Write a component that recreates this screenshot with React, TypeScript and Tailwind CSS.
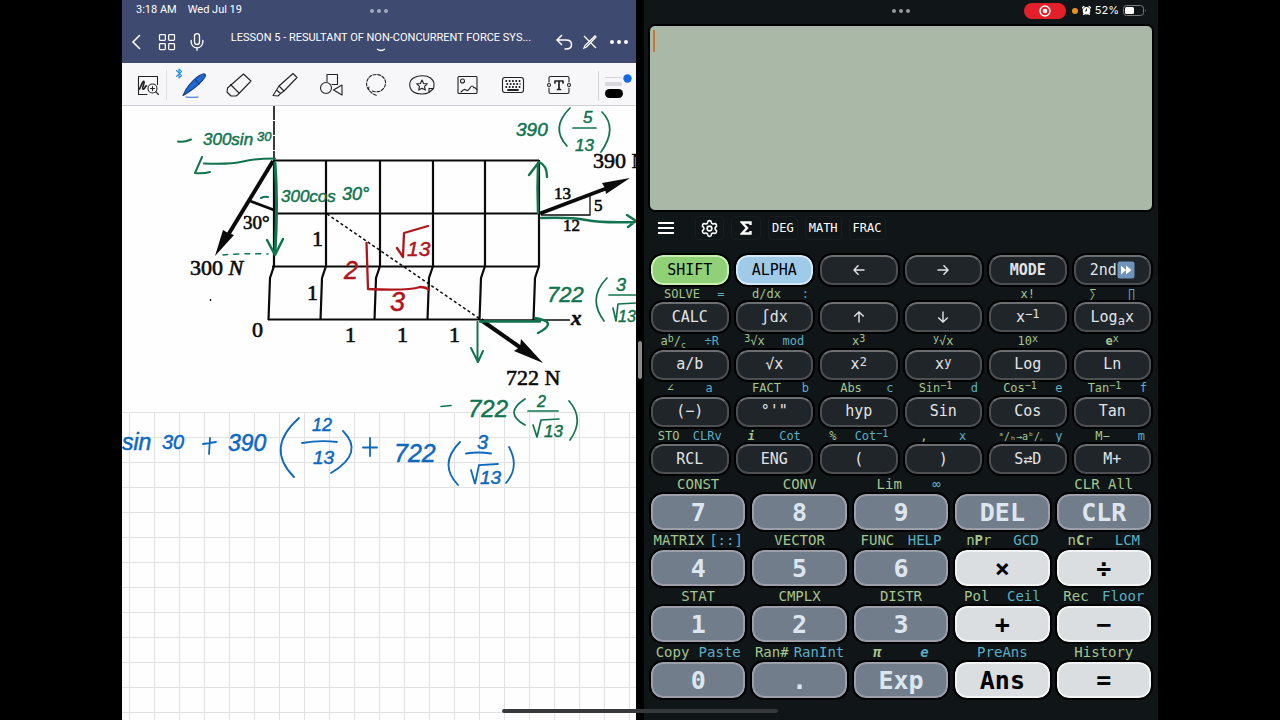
import type { ReactNode } from "react";
import { Settings, Mic, LayoutGrid } from "lucide-react";

type Label = { a?: ReactNode; b?: ReactNode; spread?: "around" | "wide" | "third" };
type Key = Label & { k: ReactNode; name: string; tone?: "shift" | "alpha" | "light"; bold?: boolean };

const Sup = ({ children }: { children: ReactNode }) => (
  <span className="relative -top-[3px] text-[12px]">{children}</span>
);
const Sub = ({ children }: { children: ReactNode }) => (
  <span className="relative top-1 text-[12px]">{children}</span>
);
const Tiny = ({ children, low }: { children: ReactNode; low?: boolean }) => (
  <span className={low ? "relative top-[3px] text-[8px]" : "relative -top-[3px] text-[10px]"}>{children}</span>
);

const Arrow = ({ turn }: { turn: string }) => (
  <svg viewBox="0 0 12 12" className={`size-3 ${turn}`} fill="none" stroke="currentColor" strokeWidth="1.4">
    <path d="M11.5 6H1M5.5 1.2L1 6l4.5 4.8" />
  </svg>
);

const functionRows: Key[][] = [
  [
    { k: "SHIFT", name: "Shift", tone: "shift" },
    { k: "ALPHA", name: "Alpha", tone: "alpha" },
    { k: <Arrow turn="rotate-0" />, name: "Left" },
    { k: <Arrow turn="rotate-180" />, name: "Right" },
    { k: "MODE", name: "Mode", bold: true },
    {
      k: (
        <>
          2nd
          <svg viewBox="0 0 18 18" className="size-[18px]">
            <rect x="0.5" y="0.5" width="17" height="17" rx="2.5" fill="#6f93ba" />
            <path d="M4 4.5L9 9l-5 4.5zM9 4.5L14.500 9 9 13.500z" fill="#fff" />
          </svg>
        </>
      ),
      name: "Second",
    },
  ],
  [
    { a: "SOLVE", b: "=", spread: "wide", k: "CALC", name: "Calc" },
    { a: "d/dx", b: ":", spread: "wide", k: "∫dx", name: "Integral" },
    { k: <Arrow turn="rotate-90" />, name: "Up" },
    { k: <Arrow turn="-rotate-90" />, name: "Down" },
    { a: "x!", k: <>x<Sup>−1</Sup></>, name: "Inverse" },
    { a: "∑", b: "∏", k: <>Log<Sub>a</Sub>x</>, name: "Log base a" },
  ],
  [
    { a: <>a<Tiny>b</Tiny>/<Tiny low>c</Tiny></>, b: "÷R", k: "a/b", name: "Fraction" },
    { a: <><Tiny>3</Tiny>√x</>, b: "mod", k: "√x", name: "Square root" },
    { a: <>x<Tiny>3</Tiny></>, k: <>x<Sup>2</Sup></>, name: "Square" },
    { a: <><Tiny>y</Tiny>√x</>, k: <>x<Sup>y</Sup></>, name: "Power" },
    { a: <>10<Tiny>x</Tiny></>, k: "Log", name: "Log" },
    { a: <><b>e</b><Tiny>x</Tiny></>, k: "Ln", name: "Ln" },
  ],
  [
    { a: "∠", b: "a", k: "(−)", name: "Negative" },
    { a: "FACT", b: "b", spread: "wide", k: "°'\"", name: "Degrees minutes seconds" },
    { a: "Abs", b: "c", spread: "wide", k: "hyp", name: "Hyperbolic" },
    { a: <>Sin<Tiny>−1</Tiny></>, b: "d", spread: "wide", k: "Sin", name: "Sin" },
    { a: <>Cos<Tiny>−1</Tiny></>, b: "e", spread: "wide", k: "Cos", name: "Cos" },
    { a: <>Tan<Tiny>−1</Tiny></>, b: "f", spread: "wide", k: "Tan", name: "Tan" },
  ],
  [
    { a: "STO", b: "CLRv", k: "RCL", name: "Recall" },
    { a: <b><i>i</i></b>, b: "Cot", k: "ENG", name: "Eng" },
    { a: "%", b: <>Cot<Tiny>−1</Tiny></>, k: "(", name: "Open bracket" },
    { a: ",", b: "x", k: ")", name: "Close bracket" },
    {
      a: <span className="text-[10px]">ᵃ/ₕ→aᵇ/<span className="text-[7px]">꜀</span></span>,
      b: "y",
      spread: "wide",
      k: "S⇄D",
      name: "S to D",
    },
    { a: "M−", b: "m", spread: "third", k: "M+", name: "M plus" },
  ],
];

const numberRows: Key[][] = [
  [
    { a: "CONST", k: "7", name: "7" },
    { a: "CONV", k: "8", name: "8" },
    { a: "Lim", b: "∞", spread: "third", k: "9", name: "9" },
    { k: "DEL", name: "Delete" },
    { a: "CLR All", k: "CLR", name: "Clear" },
  ],
  [
    { a: "MATRIX", b: "[::]", k: "4", name: "4" },
    { a: "VECTOR", k: "5", name: "5" },
    { a: "FUNC", b: "HELP", k: "6", name: "6" },
    { a: <>n<b>P</b>r</>, b: "GCD", k: "×", name: "Multiply", tone: "light" },
    { a: <>n<b>C</b>r</>, b: "LCM", k: "÷", name: "Divide", tone: "light" },
  ],
  [
    { a: "STAT", k: "1", name: "1" },
    { a: "CMPLX", k: "2", name: "2" },
    { a: "DISTR", k: "3", name: "3" },
    { a: "Pol", b: "Ceil", k: "+", name: "Plus", tone: "light" },
    { a: "Rec", b: "Floor", k: "−", name: "Minus", tone: "light" },
  ],
  [
    { a: "Copy", b: "Paste", k: "0", name: "0" },
    { a: "Ran#", b: "RanInt", k: ".", name: "Point" },
    { a: <b><i>π</i></b>, b: <b><i>e</i></b>, k: "Exp", name: "Exp" },
    { b: "PreAns", k: "Ans", name: "Answer", tone: "light" },
    { a: "History", k: "=", name: "Equals", tone: "light" },
  ],
];

function Labels({ a, b, spread = "around" }: Label) {
  const layout =
    spread === "wide"
      ? "grid grid-cols-[4fr_1fr] justify-items-center"
      : spread === "third"
        ? "grid grid-cols-[3fr_1fr] justify-items-center"
        : "flex justify-around";
  return (
    <div className={`${layout} items-center whitespace-pre`}>
      {a && <span className="text-[#a5c68e]">{a}</span>}
      {b && <span className="text-[#5cafc6]">{b}</span>}
    </div>
  );
}

function FunctionKey({ k, name, tone, bold }: Key) {
  const look =
    tone === "shift"
      ? "border-[#c6efb0] bg-[#90d076] text-black"
      : tone === "alpha"
        ? "border-[#d3e9f7] bg-[#9fcbe8] text-black"
        : "border-[#4c5053] border-t-[#6c6f72] bg-[#20252a] text-[#e0e4e6]";
  return (
    <button
      aria-label={name}
      className={`flex h-[30px] items-center justify-center whitespace-pre rounded-xl border-2 text-[15px] leading-none outline-2 outline-black ${look} ${bold ? "font-bold" : ""}`}
    >
      {k}
    </button>
  );
}

function NumberKey({ k, name, tone }: Key) {
  const look =
    tone === "light"
      ? "border-[#f1f3f4] bg-[#dadee1] text-black"
      : "border-[#9a9fa9] bg-[#727d8c] text-[#dde6ef]";
  return (
    <button
      aria-label={name}
      className={`flex h-9 items-center justify-center rounded-xl border-2 text-[25px] leading-none font-bold outline-2 outline-black ${look}`}
    >
      {k}
    </button>
  );
}

function ModeButton({ children, name, pad = "px-[3px]" }: { children: ReactNode; name: string; pad?: string }) {
  return (
    <button
      aria-label={name}
      className={`flex h-6 items-center justify-center rounded-sm border border-[#181e20] text-[12px] text-white ${pad}`}
    >
      {children}
    </button>
  );
}

function Calculator() {
  return (
    <section
      aria-label="Calculator"
      className="flex min-w-0 flex-col bg-[#101517] pb-[22px] font-['DejaVu_Sans_Mono',monospace]"
    >
      <div className="grid h-[25px] grid-cols-3 items-center px-[11px] pb-1">
        <span />
        <span className="flex justify-center gap-[3px]">
          <i className="size-1 rounded-full bg-[#96999b]" />
          <i className="size-1 rounded-full bg-[#96999b]" />
          <i className="size-1 rounded-full bg-[#96999b]" />
        </span>
        <span className="flex items-center justify-end gap-1 font-[Inter,sans-serif] text-[11px] text-white">
          <span className="mr-[2px] flex h-4 w-[42px] items-center justify-center rounded-full bg-[#e2202a]">
            <svg viewBox="0 0 12 12" className="size-3" fill="none" stroke="#fff" strokeWidth="1.400">
              <circle cx="6" cy="6" r="5" />
              <circle cx="6" cy="6" r="2.300" fill="#fff" stroke="none" />
            </svg>
          </span>
          <i className="size-[6px] rounded-full bg-[#e8921d]" />
          <svg viewBox="0 0 10 10" className="size-[9px]">
            <circle cx="5" cy="5.200" r="4.200" fill="#fff" />
            <path d="M0 2.500L2.500 0M10 2.500L7.500 0M1.500 10l1.500-2M8.500 10L7 8" stroke="#fff" strokeWidth="1.500" />
            <path d="M5 2.800v2.700H3.200" stroke="#101517" fill="none" />
          </svg>
          52%
          <svg viewBox="0 0 24 11" className="h-[11px] w-6">
            <rect x="0.500" y="0.500" width="20" height="10" rx="3" fill="none" stroke="#777b7d" />
            <rect x="2" y="2" width="9" height="7" rx="1.500" fill="#fff" />
            <path d="M22 4v3q1.500-1.500 0-3" fill="#777b7d" />
          </svg>
        </span>
      </div>

      <label className="mx-[5px] flex h-[186px] rounded-md border border-black bg-[#a9b8a7] py-1 pl-[3px] outline-1 outline-black">
        <span className="h-[22px] w-[2px] bg-[#c57b2b]" />
        <textarea aria-label="Expression" className="min-w-0 flex-1 resize-none bg-transparent p-1 text-base text-black outline-none" />
      </label>

      <nav className="mt-[5px] mb-[15px] flex h-6 items-center gap-[7px] pl-[14px]">
        <button aria-label="Menu" className="mr-[14px] flex flex-col gap-[3px]">
          <i className="h-[2px] w-4 bg-white" />
          <i className="h-[2px] w-4 bg-white" />
          <i className="h-[2px] w-4 bg-white" />
        </button>
        <ModeButton name="Settings" pad="px-1"><Settings size={19} strokeWidth={2} /></ModeButton>
        <ModeButton name="Sum" pad="px-2">
          <svg viewBox="0 0 12 14" className="h-[14px] w-3" fill="none" stroke="#fff" strokeWidth="2.400">
            <path d="M10.500 4V1.500H2L7 7l-5 5.500h8.500V10" />
          </svg>
        </ModeButton>
        <ModeButton name="Degrees">DEG</ModeButton>
        <ModeButton name="Math">MATH</ModeButton>
        <ModeButton name="Fractions">FRAC</ModeButton>
      </nav>

      <div className="flex flex-1 flex-col justify-between px-[7px] text-[12px] leading-none">
        {functionRows.map((row, i) => (
          <div key={i} className="grid grid-cols-6 gap-x-[7px]">
            {row.map((key) => (
              <div key={key.name} className="flex flex-col">
                {i > 0 && <div className="grid h-[17px]"><Labels {...key} /></div>}
                <FunctionKey {...key} />
              </div>
            ))}
          </div>
        ))}
      </div>

      <div className="px-[7px] text-[14px] leading-none">
        {numberRows.map((row, i) => (
          <div key={i} className="grid grid-cols-5 gap-x-[7px]">
            {row.map((key) => (
              <div key={key.name} className="flex flex-col">
                <div className="grid h-5"><Labels {...key} /></div>
                <NumberKey {...key} />
              </div>
            ))}
          </div>
        ))}
      </div>
    </section>
  );
}

function ToolIcon({ children }: { children: ReactNode }) {
  return (
    <svg viewBox="0 0 26 26" className="size-[26px]" fill="none" stroke="#222" strokeWidth="1.100" strokeLinejoin="round" strokeLinecap="round">
      {children}
    </svg>
  );
}

const tools: { name: string; icon: ReactNode }[] = [
  {
    name: "Zoom window",
    icon: (
      <>
        <path d="M12 22.500H3.500v-18h19v8" />
        <path d="M4.500 17C6 14 8 8 9 9.500S6.500 16 8 17s2.500-4 3.500-3" strokeWidth="1.700" />
        <circle cx="17.500" cy="16.500" r="4.500" fill="#f7f7f9" />
        <path d="M15.500 16.500h4M17.500 14.500v4M21 20l2.500 2.500" />
      </>
    ),
  },
  {
    name: "Pen",
    icon: (
      <>
        <path d="M2 23.500L5 17.500C9 11 17 3 22 2c2.500-.5 3 1.500 2 3C21 10 13 16.500 7 20.500z" fill="#2068cf" stroke="#163c7c" />
        <path d="M14 7.500l4 4.500" stroke="#163c7c" />
        <path d="M5 25q6 .5 12 0" stroke="#2068cf" />
        <path d="M-4.500 -1.500l5 5-2.500 2.500v-9l2.500 2.500-5 5" stroke="#2a8edb" />
      </>
    ),
  },
  { name: "Eraser", icon: <path d="M17.500 2L25 9 12 22.500 10 24H5l-4-4 .500-4zM4.500 12.500l8.500 8.500" /> },
  { name: "Highlighter", icon: <path d="M21 1.500L25 5.500 12 19l-5-5zM7 14l-2.500 4 4 3.500 3.500-2.500M4.500 18L1 23.500l5 .500 2.500-2.500" /> },
  {
    name: "Shapes",
    icon: (
      <>
        <path d="M9 9.500V2.500h10.500v10H14M24 13v10l-8.500-5z" />
        <circle cx="8" cy="16" r="5.500" />
      </>
    ),
  },
  {
    name: "Lasso",
    icon: <path d="M6 18C1 13 4 2.500 13 2.500S26 12 19 18c-3 2.500-8 2-11 .500M6 15c-2 3 3 7 8 8.500" strokeDasharray="3 1.600" />,
  },
  {
    name: "Stickers",
    icon: (
      <>
        <path d="M20 20.500c-4 2-12 2-15.500-.500C-.5 16-.5 9 4.500 6s13-3 17 0 4.500 6 3 10.500zM20 20.500V16.500h4.500" />
        <path d="M13 8l1.600 3.500 3.700.4-2.800 2.500.8 3.700-3.300-1.900-3.300 1.900.8-3.700-2.800-2.500 3.700-.4z" />
      </>
    ),
  },
  {
    name: "Image",
    icon: (
      <>
        <rect x="3" y="4.500" width="19" height="17" rx="1" />
        <circle cx="7.500" cy="9" r="2" />
        <path d="M6 20c4-4 4-2.500 6-1.500s3-4.500 5-4.500 1 2.500 2.500 1.500l2.500 2" />
      </>
    ),
  },
  {
    name: "Keyboard",
    icon: (
      <>
        <rect x="2.500" y="5.500" width="21" height="15" rx="2.500" />
        <path d="M5.500 9h15.500M6.500 12h14M5.500 15h15.500" strokeDasharray="1.600 1.700" strokeWidth="1.800" strokeLinecap="butt" />
        <path d="M8 18h10" strokeWidth="1.800" />
      </>
    ),
  },
  {
    name: "Text",
    icon: (
      <>
        <path d="M3 10V6q0-1.500 1.500-1.500h17Q23 4.500 23 6v4M3 16v4q0 1.500 1.500 1.500h17q1.500 0 1.500-1.500v-4" />
        <circle cx="3" cy="13" r="1.500" />
        <circle cx="23" cy="13" r="1.500" />
        <path d="M9 11V9h8v2M13 9v8.500M11.500 17.500h3" strokeWidth="1.700" />
      </>
    ),
  },
];

const GREEN = "#11744f";
const BLUE = "#0d68bf";
const RED = "#b0151b";

type Ink = { x: number; y: number; s: number; t: string };

function Written({ color, items }: { color: string; items: Ink[] }) {
  return (
    <g fill={color} stroke={color} strokeWidth="0.500" fontFamily="'Liberation Sans', sans-serif" fontStyle="italic">
      {items.map((w, i) => (
        <text key={i} x={w.x} y={w.y} fontSize={w.s}>{w.t}</text>
      ))}
    </g>
  );
}

const printed: Ink[] = [
  { x: 243, y: 229, s: 19, t: "30°" },
  { x: 593, y: 168, s: 22, t: "390 N" },
  { x: 554, y: 199, s: 17, t: "13" },
  { x: 594, y: 211, s: 17, t: "5" },
  { x: 563, y: 231, s: 17, t: "12" },
  { x: 312, y: 246, s: 22, t: "1" },
  { x: 307, y: 300, s: 22, t: "1" },
  { x: 345, y: 342, s: 22, t: "1" },
  { x: 397, y: 342, s: 22, t: "1" },
  { x: 449, y: 342, s: 22, t: "1" },
  { x: 252, y: 337, s: 22, t: "0" },
  { x: 506, y: 385, s: 22, t: "722 N" },
];

const columns = [274, 326, 380, 433, 485, 539];

function Sheet() {
  return (
    <svg viewBox="122 106 514 614" className="block w-full" role="img" aria-label="Force diagram and notes">
      <defs>
        <pattern id="squares" x="129" y="412" width="25" height="25" patternUnits="userSpaceOnUse">
          <path d="M0.500 0v25M0 0.500h25" stroke="#e1e1e4" fill="none" />
        </pattern>
      </defs>
      <rect x="122" y="106" width="514" height="614" fill="#fefefe" />
      <rect x="122" y="412" width="514" height="308" fill="url(#squares)" />

      <g stroke="#0a0a0a" fill="none" strokeWidth="2.200">
        <path d="M274 106v54" strokeWidth="1.600" strokeDasharray="14 1" />
        <path d="M274 160.500h265M274 213.500h265M272 266.500h266M268 319.500h212" />
        <path d="M480 320h90" strokeWidth="1.500" />
        {columns.map((x) => (
          <path key={x} d={`M${x} 160V266l-4 12-1.500 42`} />
        ))}
        <path d="M327 214L480 319" strokeWidth="1.500" strokeDasharray="3 2.500" />
        <path d="M273 161L225 240" strokeWidth="4" />
        <path d="M250 201l24 9" strokeWidth="2.600" />
        <path d="M540 213.500l66-25" strokeWidth="3.600" />
        <path d="M541 215h49V196" strokeWidth="1.300" />
        <path d="M481 320l40 28" strokeWidth="4" />
      </g>
      <g fill="#0a0a0a">
        <path d="M215 256l8-26 5 3 6 2z" />
        <path d="M630 178l-28 5 3 5 1 6z" />
        <path d="M543 363l-29-12 6-4 1-8z" />
        <circle cx="210.500" cy="300" r="0.900" />
      </g>
      <g fill="#0a0a0a" stroke="#0a0a0a" strokeWidth="0.600" fontFamily="'Liberation Serif', serif">
        {printed.map((p, i) => (
          <text key={i} x={p.x} y={p.y} fontSize={p.s}>{p.t}</text>
        ))}
        <text x="190" y="275" fontSize="22">300 <tspan fontStyle="italic">N</tspan></text>
        <text x="571" y="325" fontSize="21" fontStyle="italic" fontWeight="bold">x</text>
      </g>

      <g stroke={GREEN} fill="none" strokeWidth="2" strokeLinecap="round" strokeLinejoin="round">
        <path d="M178 141.500q6 1 13-2" />
        <path d="M275 158.500q-20 0-32 3t-39 2M202 157l-7 16q8 1 15-1" />
        <path d="M261 198q4-2 7-1" />
        <path d="M275 163q3 40 0 90" strokeWidth="3" />
        <path d="M267 240l8 15 8-16" strokeWidth="2.500" />
        <path d="M223 255q20-2 45-1" strokeDasharray="5 6" strokeWidth="1.500" />
        <path d="M538 213q-1-26 0-50M529 175l10-13q8 3 8 15" strokeWidth="2.400" />
        <path d="M541 218q30-1 45 2t49 2M627 215l9 6-8 6" strokeWidth="2.400" />
        <path d="M480 321.500h60M535 318q13 2 13 6t-10 9" strokeWidth="2.400" />
        <path d="M477.500 322v40M471 348l7 14 5-11" />
        <path d="M570 108q-20 20-3 38M573 128h23M602 112q16 16-1 40" strokeWidth="1.700" />
        <path d="M607 278q-20 20-3 43M609 295h27M613 308l3 13 2-17 18-1" strokeWidth="1.700" />
        <path d="M441 406.500l10-1M525 399q-22 14 0 26M528 411h30M533 425l4 12 4-17 18-1M569 401q16 18 1 39" strokeWidth="1.700" />
      </g>
      <Written
        color={GREEN}
        items={[
          { x: 203, y: 145, s: 17, t: "300sin" },
          { x: 257, y: 141, s: 13, t: "30" },
          { x: 281, y: 202, s: 17, t: "300cos" },
          { x: 342, y: 200, s: 18, t: "30°" },
          { x: 516, y: 136, s: 19, t: "390" },
          { x: 583, y: 123, s: 17, t: "5" },
          { x: 575, y: 151, s: 17, t: "13" },
          { x: 547, y: 302, s: 22, t: "722" },
          { x: 616, y: 291, s: 18, t: "3" },
          { x: 618, y: 322, s: 16, t: "13" },
          { x: 468, y: 417, s: 24, t: "722" },
          { x: 537, y: 407, s: 16, t: "2" },
          { x: 544, y: 437, s: 17, t: "13" },
        ]}
      />

      <g stroke={BLUE} fill="none" strokeWidth="1.800" strokeLinecap="round">
        <path d="M203 444l13-2M210 438l-1 16M363 447.500h14M370 438v18" />
        <path d="M299 418q-34 30-5 59M302 443q18-3 35-1M343 431q22 22-12 42" />
        <path d="M460 442q-22 22-2 43M466 453.500q12-2 25 0M471 470l4 14 4-19 19-1M509 447q11 20-3 36" />
      </g>
      <Written
        color={BLUE}
        items={[
          { x: 122, y: 450, s: 23, t: "sin" },
          { x: 162, y: 449, s: 20, t: "30" },
          { x: 228, y: 451, s: 23, t: "390" },
          { x: 312, y: 431, s: 18, t: "12" },
          { x: 313, y: 464, s: 19, t: "13" },
          { x: 394, y: 462, s: 25, t: "722" },
          { x: 477, y: 449, s: 20, t: "3" },
          { x: 480, y: 484, s: 19, t: "13" },
        ]}
      />

      <g stroke={RED} fill="none" strokeWidth="2.300" strokeLinecap="round" strokeLinejoin="round">
        <path d="M366.500 243l1.500 46q40 2 52-2 6 0 9 3" />
        <path d="M397 248l6 9 1-24 24-7" />
      </g>
      <Written
        color={RED}
        items={[
          { x: 407, y: 256, s: 21, t: "13" },
          { x: 344, y: 279, s: 25, t: "2" },
          { x: 390, y: 311, s: 27, t: "3" },
        ]}
      />
    </svg>
  );
}

function Notes() {
  return (
    <section aria-label="Notes" className="flex min-w-0 flex-col overflow-hidden bg-white font-[Roboto,sans-serif]">
      <header className="h-[63px] bg-[#3e4a70] text-[11px] text-white">
        <div className="grid h-[21px] grid-cols-[1fr_auto_1fr] items-center pl-[14px]">
          <span className="flex gap-[11px]"><span>3:18 AM</span><span>Wed Jul 19</span></span>
          <span className="flex gap-[3px] pr-[14px]">
            <i className="size-1 rounded-full bg-[#a3aac2]" />
            <i className="size-1 rounded-full bg-[#a3aac2]" />
            <i className="size-1 rounded-full bg-[#a3aac2]" />
          </span>
        </div>
        <div className="flex h-[42px] items-center pl-[9px]">
          <button aria-label="Back" className="flex w-[21px] items-center">
            <svg viewBox="0 0 10 16" className="h-4 w-[10px]" fill="none" stroke="#fff" strokeWidth="1.600"><path d="M9 1L2 8l7 7" /></svg>
          </button>
          <button aria-label="Pages" className="flex w-[30px] justify-center"><LayoutGrid size={20} strokeWidth={1.5} /></button>
          <button aria-label="Record" className="flex w-[30px] justify-center"><Mic size={20} strokeWidth={1.6} /></button>
          <button className="flex min-w-0 flex-1 flex-col items-center gap-1 leading-3">
            <span className="whitespace-nowrap">LESSON 5 - RESULTANT OF NON-CONCURRENT FORCE SYS...</span>
            <svg viewBox="0 0 10 4" className="h-1 w-[10px]" fill="none" stroke="#fff" strokeWidth="1.300"><path d="M1 1q4 3 8 0" /></svg>
          </button>
          <button aria-label="Undo" className="flex w-7 justify-center">
            <svg viewBox="0 0 18 18" className="size-[18px]" fill="none" stroke="#fff" strokeWidth="1.500"><path d="M7 2L2 7l5 5M2 7h9q5.500 0 5.500 4.500T11 16H9.500" /></svg>
          </button>
          <button aria-label="Read only" className="flex w-6 justify-center">
            <svg viewBox="0 0 16 16" className="size-4" fill="none" stroke="#fff" strokeWidth="1.300"><path d="M2 2l5 5M9 9l5 5M2 14l1-2.500L13 2l1 1L4.500 13z" /></svg>
          </button>
          <button aria-label="More" className="flex w-[34px] justify-center gap-[3px]">
            <i className="size-1 rounded-full bg-white" />
            <i className="size-1 rounded-full bg-white" />
            <i className="size-1 rounded-full bg-white" />
          </button>
        </div>
      </header>
      <div className="flex h-[43px] border-b border-[#cfcfd3] bg-[#f7f7f9] pl-[3px]">
        {tools.map((tool, i) => (
          <button
            key={tool.name}
            aria-label={tool.name}
            className="flex flex-1 items-center justify-center pt-[2px] [&_svg]:overflow-visible"
          >
            <ToolIcon>{tool.icon}</ToolIcon>
            {i === 0 && <i className="-mr-[6px] ml-[5px] h-[30px] w-px bg-[#dedee2]" />}
          </button>
        ))}
        <button aria-label="Stroke" className="flex w-[54px] items-center justify-end pt-1 pr-[2px]">
          <i className="mr-[5px] h-[30px] w-px bg-[#d4d4d8]" />
          <svg viewBox="0 0 30 24" className="h-6 w-[30px]">
            <rect x="1" y="3" width="17" height="1" fill="#d5d5d8" />
            <rect x="1" y="8" width="17" height="4" rx="1" fill="#d8d8da" />
            <rect x="1" y="15" width="18" height="9" rx="4.500" fill="#000" />
            <circle cx="23.500" cy="4.500" r="4.200" fill="#146be0" />
          </svg>
        </button>
      </div>
      <Sheet />
    </section>
  );
}

export default function App() {
  return (
    <main className="relative grid h-screen grid-cols-[1fr_8px_1fr] overflow-hidden bg-black px-[122px]">
      <Notes />
      <div className="flex items-center justify-center">
        <span className="h-[38px] w-1 rounded-full bg-[#8c8c8c]" />
      </div>
      <Calculator />
      <div className="absolute bottom-[7px] left-1/2 h-1 w-[276px] -translate-x-1/2 rounded-full bg-[#36393b]" />
    </main>
  );
}
